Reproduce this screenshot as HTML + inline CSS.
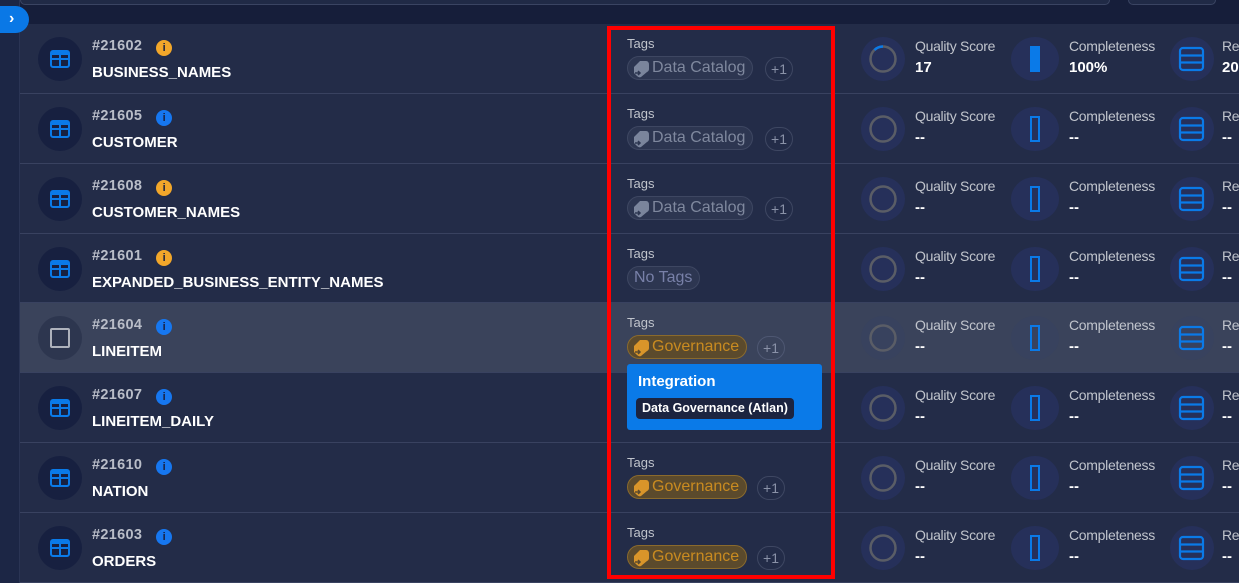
<!DOCTYPE html>
<html><head><meta charset="utf-8"><style>
*{margin:0;padding:0;box-sizing:border-box}
body{width:1239px;height:583px;overflow:hidden;background:#161e3a;font-family:"Liberation Sans",sans-serif;position:relative}
.a{position:absolute}
.side{left:0;top:0;width:20px;height:583px;background:#1c2645;border-right:1px solid #2a3454}
.row{position:absolute;left:20px;width:1219px;height:70px;background:#232c48;border-bottom:1px solid #394260}
.row.hl{background:#3a435b}
.ic{position:absolute;left:18px;top:13px;width:44px;height:44px;border-radius:50%;background:#172040}
.hl .ic{background:#2d364f}
.id{position:absolute;left:72px;top:14px;font-size:14.5px;color:#b9bdc8;font-weight:bold;letter-spacing:.3px}
.info{display:inline-block;width:16px;height:16px;border-radius:50%;color:#1a2040;font-size:11px;text-align:center;line-height:16px;font-weight:bold;margin-left:14px;vertical-align:-1px;letter-spacing:0}
.nm{position:absolute;left:72px;top:40px;font-size:15px;color:#fff;font-weight:bold}
.tl{position:absolute;left:607px;top:12px;font-size:13px;color:#c0c4cc}
.pill{position:absolute;left:607px;top:32px;height:24px;border-radius:12px;border:1px solid #3e4762;background:#2d3651;color:#7f889e;font-size:16px;line-height:22px;padding:0 7px 0 24px}
.pill svg{position:absolute;left:3px;top:2px}
.pill.g{background:#5b4a2c;border-color:#8a6a2c;color:#c98b20}
.pill.n{padding-left:6px;color:#7880a8}
.p1{position:absolute;top:33px;width:28px;height:24px;border-radius:12px;border:1px solid #3e4762;color:#8a92a8;font-size:14px;text-align:center;line-height:22px}
.hl .p1{border-color:#4e5772}
.c{position:absolute;top:13px;width:44px;height:44px;border-radius:50%;background:#26305a}
.hl .c{background:#38425e}
.lb{position:absolute;top:14px;font-size:14px;color:#c0c4cc;letter-spacing:-.3px}
.vl{position:absolute;top:35px;font-size:15px;color:#fff;font-weight:bold}
</style></head><body>
<div class="a" style="left:20px;top:-10px;width:1090px;height:15px;border:1px solid #3a4462;border-radius:5px;background:#202a46"></div>
<div class="a" style="left:1128px;top:-10px;width:88px;height:15px;border:1px solid #3a4462;border-radius:5px;background:#202a46"></div>
<div class="a side"></div>

<!--ROWS-->
<div class="row" style="top:24px"><div class="ic"><svg class="a" style="left:12px;top:13px" width="20" height="18"><rect x="1" y="1" width="18" height="16" rx="2" fill="none" stroke="#0a7ae8" stroke-width="2"/><path d="M1 9H19M10 1V17" stroke="#0a7ae8" stroke-width="2"/><rect x="1" y="1" width="18" height="4" fill="#0a7ae8"/></svg></div><div class="id">#21602<span class="info" style="background:#f2a72a">i</span></div><div class="nm">BUSINESS_NAMES</div><div class="tl">Tags</div><div class="pill"><svg width="20" height="20"><path d="M3 8L9 2H15Q18 2 18 6V10Q18 12 16 13L10 18Q8 19 6 17L3 14Z" fill="#7b859c"/><path d="M4 14H9M7 12L9 14L7 16" stroke="#2d3651" stroke-width="1.5" fill="none"/></svg>Data Catalog</div><div class="p1" style="left:745px">+1</div><div class="c" style="left:841px"><svg width="44" height="44"><circle cx="22" cy="22" r="12.5" fill="none" stroke="#5a5d66" stroke-width="2.5"/><path d="M13.5 13Q17 9.5 22 9.5" fill="none" stroke="#0a7ae8" stroke-width="2.5"/></svg></div><div class="lb" style="left:895px">Quality Score</div><div class="vl" style="left:895px">17</div><div class="c" style="left:991px;width:48px"><div class="a" style="left:19px;top:9px;width:10px;height:26px;background:#0a7ae8"></div></div><div class="lb" style="left:1049px">Completeness</div><div class="vl" style="left:1049px">100%</div><div class="c" style="left:1150px"><svg width="44" height="44"><rect x="10" y="11" width="23" height="22" rx="3" fill="none" stroke="#0a7ae8" stroke-width="2.2"/><path d="M10 18.5H33M10 25.5H33" stroke="#0a7ae8" stroke-width="2.2"/></svg></div><div class="lb" style="left:1202px">Re</div><div class="vl" style="left:1202px">20</div></div>

<div class="row" style="top:94px"><div class="ic"><svg class="a" style="left:12px;top:13px" width="20" height="18"><rect x="1" y="1" width="18" height="16" rx="2" fill="none" stroke="#0a7ae8" stroke-width="2"/><path d="M1 9H19M10 1V17" stroke="#0a7ae8" stroke-width="2"/><rect x="1" y="1" width="18" height="4" fill="#0a7ae8"/></svg></div><div class="id">#21605<span class="info" style="background:#1677f0">i</span></div><div class="nm">CUSTOMER</div><div class="tl">Tags</div><div class="pill"><svg width="20" height="20"><path d="M3 8L9 2H15Q18 2 18 6V10Q18 12 16 13L10 18Q8 19 6 17L3 14Z" fill="#7b859c"/><path d="M4 14H9M7 12L9 14L7 16" stroke="#2d3651" stroke-width="1.5" fill="none"/></svg>Data Catalog</div><div class="p1" style="left:745px">+1</div><div class="c" style="left:841px"><svg width="44" height="44"><circle cx="22" cy="22" r="12.5" fill="none" stroke="#5a5d66" stroke-width="2.5"/></svg></div><div class="lb" style="left:895px">Quality Score</div><div class="vl" style="left:895px">--</div><div class="c" style="left:991px;width:48px"><div class="a" style="left:19px;top:9px;width:10px;height:26px;border:2px solid #0a7ae8"></div></div><div class="lb" style="left:1049px">Completeness</div><div class="vl" style="left:1049px">--</div><div class="c" style="left:1150px"><svg width="44" height="44"><rect x="10" y="11" width="23" height="22" rx="3" fill="none" stroke="#0a7ae8" stroke-width="2.2"/><path d="M10 18.5H33M10 25.5H33" stroke="#0a7ae8" stroke-width="2.2"/></svg></div><div class="lb" style="left:1202px">Re</div><div class="vl" style="left:1202px">--</div></div>

<div class="row" style="top:164px"><div class="ic"><svg class="a" style="left:12px;top:13px" width="20" height="18"><rect x="1" y="1" width="18" height="16" rx="2" fill="none" stroke="#0a7ae8" stroke-width="2"/><path d="M1 9H19M10 1V17" stroke="#0a7ae8" stroke-width="2"/><rect x="1" y="1" width="18" height="4" fill="#0a7ae8"/></svg></div><div class="id">#21608<span class="info" style="background:#f2a72a">i</span></div><div class="nm">CUSTOMER_NAMES</div><div class="tl">Tags</div><div class="pill"><svg width="20" height="20"><path d="M3 8L9 2H15Q18 2 18 6V10Q18 12 16 13L10 18Q8 19 6 17L3 14Z" fill="#7b859c"/><path d="M4 14H9M7 12L9 14L7 16" stroke="#2d3651" stroke-width="1.5" fill="none"/></svg>Data Catalog</div><div class="p1" style="left:745px">+1</div><div class="c" style="left:841px"><svg width="44" height="44"><circle cx="22" cy="22" r="12.5" fill="none" stroke="#5a5d66" stroke-width="2.5"/></svg></div><div class="lb" style="left:895px">Quality Score</div><div class="vl" style="left:895px">--</div><div class="c" style="left:991px;width:48px"><div class="a" style="left:19px;top:9px;width:10px;height:26px;border:2px solid #0a7ae8"></div></div><div class="lb" style="left:1049px">Completeness</div><div class="vl" style="left:1049px">--</div><div class="c" style="left:1150px"><svg width="44" height="44"><rect x="10" y="11" width="23" height="22" rx="3" fill="none" stroke="#0a7ae8" stroke-width="2.2"/><path d="M10 18.5H33M10 25.5H33" stroke="#0a7ae8" stroke-width="2.2"/></svg></div><div class="lb" style="left:1202px">Re</div><div class="vl" style="left:1202px">--</div></div>

<div class="row" style="top:234px;height:69px"><div class="ic"><svg class="a" style="left:12px;top:13px" width="20" height="18"><rect x="1" y="1" width="18" height="16" rx="2" fill="none" stroke="#0a7ae8" stroke-width="2"/><path d="M1 9H19M10 1V17" stroke="#0a7ae8" stroke-width="2"/><rect x="1" y="1" width="18" height="4" fill="#0a7ae8"/></svg></div><div class="id">#21601<span class="info" style="background:#f2a72a">i</span></div><div class="nm">EXPANDED_BUSINESS_ENTITY_NAMES</div><div class="tl">Tags</div><div class="pill n">No Tags</div><div class="c" style="left:841px"><svg width="44" height="44"><circle cx="22" cy="22" r="12.5" fill="none" stroke="#5a5d66" stroke-width="2.5"/></svg></div><div class="lb" style="left:895px">Quality Score</div><div class="vl" style="left:895px">--</div><div class="c" style="left:991px;width:48px"><div class="a" style="left:19px;top:9px;width:10px;height:26px;border:2px solid #0a7ae8"></div></div><div class="lb" style="left:1049px">Completeness</div><div class="vl" style="left:1049px">--</div><div class="c" style="left:1150px"><svg width="44" height="44"><rect x="10" y="11" width="23" height="22" rx="3" fill="none" stroke="#0a7ae8" stroke-width="2.2"/><path d="M10 18.5H33M10 25.5H33" stroke="#0a7ae8" stroke-width="2.2"/></svg></div><div class="lb" style="left:1202px">Re</div><div class="vl" style="left:1202px">--</div></div>

<div class="row hl" style="top:303px"><div class="ic"><div class="a" style="left:12px;top:12px;width:20px;height:20px;border:2px solid #aeb2bc;border-radius:2px"></div></div><div class="id">#21604<span class="info" style="background:#1677f0">i</span></div><div class="nm">LINEITEM</div><div class="tl">Tags</div><div class="pill g"><svg width="20" height="20"><path d="M3 8L9 2H15Q18 2 18 6V10Q18 12 16 13L10 18Q8 19 6 17L3 14Z" fill="#d9952a"/><path d="M4 14H9M7 12L9 14L7 16" stroke="#5b4a2c" stroke-width="1.5" fill="none"/></svg>Governance</div><div class="p1" style="left:737px">+1</div><div class="c" style="left:841px"><svg width="44" height="44"><circle cx="22" cy="22" r="12.5" fill="none" stroke="#5a5d66" stroke-width="2.5"/></svg></div><div class="lb" style="left:895px">Quality Score</div><div class="vl" style="left:895px">--</div><div class="c" style="left:991px;width:48px"><div class="a" style="left:19px;top:9px;width:10px;height:26px;border:2px solid #0a7ae8"></div></div><div class="lb" style="left:1049px">Completeness</div><div class="vl" style="left:1049px">--</div><div class="c" style="left:1150px"><svg width="44" height="44"><rect x="10" y="11" width="23" height="22" rx="3" fill="none" stroke="#0a7ae8" stroke-width="2.2"/><path d="M10 18.5H33M10 25.5H33" stroke="#0a7ae8" stroke-width="2.2"/></svg></div><div class="lb" style="left:1202px">Re</div><div class="vl" style="left:1202px">--</div></div>

<div class="row" style="top:373px"><div class="ic"><svg class="a" style="left:12px;top:13px" width="20" height="18"><rect x="1" y="1" width="18" height="16" rx="2" fill="none" stroke="#0a7ae8" stroke-width="2"/><path d="M1 9H19M10 1V17" stroke="#0a7ae8" stroke-width="2"/><rect x="1" y="1" width="18" height="4" fill="#0a7ae8"/></svg></div><div class="id">#21607<span class="info" style="background:#1677f0">i</span></div><div class="nm">LINEITEM_DAILY</div><div class="c" style="left:841px"><svg width="44" height="44"><circle cx="22" cy="22" r="12.5" fill="none" stroke="#5a5d66" stroke-width="2.5"/></svg></div><div class="lb" style="left:895px">Quality Score</div><div class="vl" style="left:895px">--</div><div class="c" style="left:991px;width:48px"><div class="a" style="left:19px;top:9px;width:10px;height:26px;border:2px solid #0a7ae8"></div></div><div class="lb" style="left:1049px">Completeness</div><div class="vl" style="left:1049px">--</div><div class="c" style="left:1150px"><svg width="44" height="44"><rect x="10" y="11" width="23" height="22" rx="3" fill="none" stroke="#0a7ae8" stroke-width="2.2"/><path d="M10 18.5H33M10 25.5H33" stroke="#0a7ae8" stroke-width="2.2"/></svg></div><div class="lb" style="left:1202px">Re</div><div class="vl" style="left:1202px">--</div></div>

<div class="row" style="top:443px"><div class="ic"><svg class="a" style="left:12px;top:13px" width="20" height="18"><rect x="1" y="1" width="18" height="16" rx="2" fill="none" stroke="#0a7ae8" stroke-width="2"/><path d="M1 9H19M10 1V17" stroke="#0a7ae8" stroke-width="2"/><rect x="1" y="1" width="18" height="4" fill="#0a7ae8"/></svg></div><div class="id">#21610<span class="info" style="background:#1677f0">i</span></div><div class="nm">NATION</div><div class="tl">Tags</div><div class="pill g"><svg width="20" height="20"><path d="M3 8L9 2H15Q18 2 18 6V10Q18 12 16 13L10 18Q8 19 6 17L3 14Z" fill="#d9952a"/><path d="M4 14H9M7 12L9 14L7 16" stroke="#5b4a2c" stroke-width="1.5" fill="none"/></svg>Governance</div><div class="p1" style="left:737px">+1</div><div class="c" style="left:841px"><svg width="44" height="44"><circle cx="22" cy="22" r="12.5" fill="none" stroke="#5a5d66" stroke-width="2.5"/></svg></div><div class="lb" style="left:895px">Quality Score</div><div class="vl" style="left:895px">--</div><div class="c" style="left:991px;width:48px"><div class="a" style="left:19px;top:9px;width:10px;height:26px;border:2px solid #0a7ae8"></div></div><div class="lb" style="left:1049px">Completeness</div><div class="vl" style="left:1049px">--</div><div class="c" style="left:1150px"><svg width="44" height="44"><rect x="10" y="11" width="23" height="22" rx="3" fill="none" stroke="#0a7ae8" stroke-width="2.2"/><path d="M10 18.5H33M10 25.5H33" stroke="#0a7ae8" stroke-width="2.2"/></svg></div><div class="lb" style="left:1202px">Re</div><div class="vl" style="left:1202px">--</div></div>

<div class="row" style="top:513px"><div class="ic"><svg class="a" style="left:12px;top:13px" width="20" height="18"><rect x="1" y="1" width="18" height="16" rx="2" fill="none" stroke="#0a7ae8" stroke-width="2"/><path d="M1 9H19M10 1V17" stroke="#0a7ae8" stroke-width="2"/><rect x="1" y="1" width="18" height="4" fill="#0a7ae8"/></svg></div><div class="id">#21603<span class="info" style="background:#1677f0">i</span></div><div class="nm">ORDERS</div><div class="tl">Tags</div><div class="pill g"><svg width="20" height="20"><path d="M3 8L9 2H15Q18 2 18 6V10Q18 12 16 13L10 18Q8 19 6 17L3 14Z" fill="#d9952a"/><path d="M4 14H9M7 12L9 14L7 16" stroke="#5b4a2c" stroke-width="1.5" fill="none"/></svg>Governance</div><div class="p1" style="left:737px">+1</div><div class="c" style="left:841px"><svg width="44" height="44"><circle cx="22" cy="22" r="12.5" fill="none" stroke="#5a5d66" stroke-width="2.5"/></svg></div><div class="lb" style="left:895px">Quality Score</div><div class="vl" style="left:895px">--</div><div class="c" style="left:991px;width:48px"><div class="a" style="left:19px;top:9px;width:10px;height:26px;border:2px solid #0a7ae8"></div></div><div class="lb" style="left:1049px">Completeness</div><div class="vl" style="left:1049px">--</div><div class="c" style="left:1150px"><svg width="44" height="44"><rect x="10" y="11" width="23" height="22" rx="3" fill="none" stroke="#0a7ae8" stroke-width="2.2"/><path d="M10 18.5H33M10 25.5H33" stroke="#0a7ae8" stroke-width="2.2"/></svg></div><div class="lb" style="left:1202px">Re</div><div class="vl" style="left:1202px">--</div></div>

<div class="a" style="left:0;top:6px;width:29px;height:27px;border-radius:0 14px 14px 0;background:#0a78e6;color:#fff;font-weight:bold;font-size:16px;line-height:25px;padding-left:9px">&#8250;</div>
<div class="a" style="left:627px;top:364px;width:195px;height:66px;background:#0a7ae8;border-radius:3px">
<div class="a" style="left:11px;top:9px;color:#fff;font-weight:bold;font-size:15px">Integration</div>
<div class="a" style="left:9px;top:34px;height:21px;padding:0 6px;background:#1c2440;border-radius:4px;color:#fff;font-weight:bold;font-size:12.5px;line-height:21px">Data Governance (Atlan)</div>
</div>
<div class="a" style="left:607px;top:26px;width:228px;height:553px;border:4px solid #ff0000"></div>
</body></html>
